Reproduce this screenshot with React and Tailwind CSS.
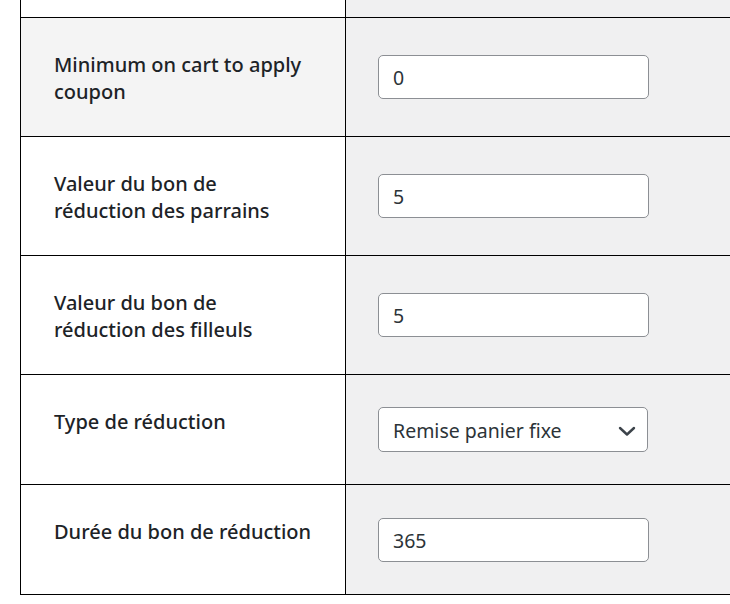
import React from "react";

const font = { fontFamily: '"Noto Sans", "Open Sans", sans-serif' };

function Row({ label, h, bgLeft, children }) {
  return (
    <div className={`flex border-b border-black box-border ${h}`}>
      <div className={`w-[325px] shrink-0 border-r border-black pt-[33px] pl-[33px] pr-[20px] ${bgLeft}`}>
        <div className="text-[20px] leading-[27px] font-medium text-[#1d2327]">{label}</div>
      </div>
      <div className="flex-1 bg-[#f0f0f1] flex items-center pl-[32px]">{children}</div>
    </div>
  );
}

function TextInput({ value }) {
  return (
    <div className="w-[271px] h-[44px] bg-white border border-[#8c8f94] rounded-[5px] flex items-center pl-[14px] pt-[2px] text-[19.5px] text-[#2c3338]">
      {value}
    </div>
  );
}

function Select({ value }) {
  return (
    <div className="w-[270px] h-[45px] bg-white border border-[#8c8f94] rounded-[5px] flex items-center justify-between pl-[14px] pr-[10px] pt-[2px] text-[19.5px] text-[#2c3338]">
      <span>{value}</span>
      <svg width="20" height="20" viewBox="0 0 20 20" fill="none">
        <path d="M3 7l7 6.5 7-6.5" stroke="#3c434a" strokeWidth="2.4" strokeLinecap="round" strokeLinejoin="round" />
      </svg>
    </div>
  );
}

export default function App() {
  return (
    <div className="w-[730px] h-[604px] bg-white overflow-hidden" style={font}>
      <div className="ml-[20px] border-l border-black">
        <div className="flex border-b border-black box-border h-[18px]">
          <div className="w-[325px] shrink-0 border-r border-black bg-white" />
          <div className="flex-1 bg-[#f0f0f1]" />
        </div>
        <Row label={<>Minimum on cart to apply<br />coupon</>} h="h-[119px]" bgLeft="bg-[#f4f4f4]">
          <TextInput value="0" />
        </Row>
        <Row label={<>Valeur du bon de<br />réduction des parrains</>} h="h-[119px]" bgLeft="bg-white">
          <TextInput value="5" />
        </Row>
        <Row label={<>Valeur du bon de<br />réduction des filleuls</>} h="h-[119px]" bgLeft="bg-white">
          <TextInput value="5" />
        </Row>
        <Row label="Type de réduction" h="h-[110px]" bgLeft="bg-white">
          <Select value="Remise panier fixe" />
        </Row>
        <Row label="Durée du bon de réduction" h="h-[110px]" bgLeft="bg-white">
          <TextInput value="365" />
        </Row>
      </div>
    </div>
  );
}
